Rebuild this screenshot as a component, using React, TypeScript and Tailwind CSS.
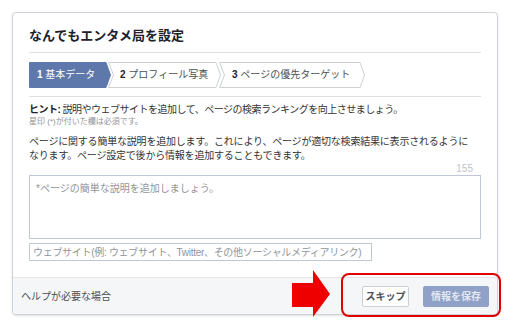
import React from 'react';

const font = { fontFamily: '"Liberation Sans", "Noto Sans CJK JP", sans-serif' };

interface Step {
  num: string;
  label: string;
  width: number;
  body: number;
  notch: boolean;
  active: boolean;
  pad: string;
  shift: string;
}

const steps: Step[] = [
  { num: '1', label: '基本データ', width: 82, body: 77, notch: false, active: true, pad: 'pl-2', shift: '' },
  { num: '2', label: 'プロフィール写真', width: 113, body: 108, notch: true, active: false, pad: 'pl-[12px]', shift: '-ml-[3px]' },
  { num: '3', label: 'ページの優先ターゲット', width: 146, body: 141, notch: true, active: false, pad: 'pl-[13px]', shift: '-ml-[2px]' },
];

const StepItem = ({ step }: { step: Step }) => {
  const d = step.notch
    ? `M0.5,0.5 H${step.body} L${step.width - 0.5},13 L${step.body},25.5 H0.5 L5.5,13 Z`
    : `M0.5,0.5 H${step.body} L${step.width - 0.5},13 L${step.body},25.5 H0.5 Z`;
  return (
    <div className={`relative flex items-center h-[26px] ${step.pad} ${step.shift}`} style={{ width: step.width }}>
      {/* chevron background */}
      <svg className="absolute inset-0" width={step.width} height={26} viewBox={`0 0 ${step.width} 26`}>
        <path
          d={d}
          fill={step.active ? '#5f78ab' : '#ffffff'}
          stroke={step.active ? '#5f78ab' : '#ccd0d5'}
          strokeWidth={1}
        />
      </svg>
      <span className={`relative text-[10px] leading-[14px] whitespace-nowrap ${step.active ? 'text-white' : 'text-[#4b4f56]'}`}>
        <span className={`font-bold ${step.active ? '' : 'text-[#1d2129]'}`}>{step.num}</span> {step.label}
      </span>
    </div>
  );
};

const App = () => {
  return (
    <div className="relative w-[514px] h-[327px] bg-white pl-[12px] pt-[12px] overflow-hidden" style={font}>
      {/* Dialog card */}
      <div className="w-[486px] bg-white border border-[#cfd2d8] rounded-[4px] shadow-[0_1px_2px_rgba(0,0,0,0.12)] overflow-hidden">
        <div className="px-[16px]">
          {/* Title */}
          <h1 className="pt-[14px] pb-[7px] border-b border-[#dddfe2] text-[13px] leading-[18px] font-bold text-[#1d2129]">
            なんでもエンタメ局を設定
          </h1>

          {/* Steps */}
          <div className="pt-[9px] pb-[8px] border-b border-[#dddfe2]">
            <div className="flex">
              {steps.map((s) => (
                <StepItem key={s.num} step={s} />
              ))}
            </div>
          </div>

          {/* Hint */}
          <p className="mt-[6px] text-[10px] leading-[14px] text-[#333] tracking-[-0.5px] whitespace-nowrap">
            <span className="font-bold text-[#1d2129]">ヒント:</span> 説明やウェブサイトを追加して、ページの検索ランキングを向上させましょう。
          </p>
          <p className="text-[8px] leading-[10px] text-[#90949c] whitespace-nowrap">星印 (*)が付いた欄は必須です。</p>

          <p className="mt-[8px] text-[10px] leading-[14px] text-[#333] tracking-[-0.2px] whitespace-nowrap">
            ページに関する簡単な説明を追加します。これにより、ページが適切な検索結果に表示されるように
            <br />
            なります。ページ設定で後から情報を追加することもできます。
          </p>

          <div className="text-right pr-2 text-[10px] leading-[12px] text-[#bec3c9]">155</div>

          {/* Description */}
          <textarea
            className="block w-full h-[64px] resize-none border border-[#bdc7d8] px-[6px] pt-[6px] text-[10px] leading-[14px] text-[#1d2129] placeholder:text-[#90949c] outline-none"
            placeholder="*ページの簡単な説明を追加しましょう。"
          />

          {/* Website */}
          <input
            className="block mt-[4px] w-[343px] h-[18px] border border-[#bdc7d8] px-[3px] text-[10px] text-[#1d2129] tracking-[-0.3px] placeholder:text-[#90949c] outline-none"
            placeholder="ウェブサイト(例: ウェブサイト、Twitter、その他ソーシャルメディアリンク)"
          />

          <div className="h-[16px]" />
        </div>

        {/* Footer */}
        <div className="flex items-center justify-between h-[37px] pl-2 pr-2 bg-[#f5f6f7] border-t border-[#e5e5e5]">
          <span className="text-[10px] text-[#4b4f56]">ヘルプが必要な場合</span>
          <div className="flex gap-[14px]">
            <button className="w-[47px] h-[21px] bg-white border border-[#ccd0d5] rounded-[2px] text-[10px] font-bold text-[#4b4f56]">
              スキップ
            </button>
            <button className="w-[66px] h-[21px] bg-[#8fa1c7] border border-[#8fa1c7] rounded-[2px] text-[10px] font-bold text-white/75">
              情報を保存
            </button>
          </div>
        </div>
      </div>

      {/* Annotation: arrow */}
      <svg className="absolute left-[292px] top-[270px]" width="38" height="47" viewBox="0 0 38 47">
        <polygon points="0,13 21,13 21,0 38,24 21,47 21,37 0,37" fill="#ee0000" />
      </svg>

      {/* Annotation: highlight box */}
      <div className="absolute left-[341px] top-[273px] w-[160px] h-[44px] border-2 border-[#e00000] rounded-[8px]" />
    </div>
  );
};

export default App;
